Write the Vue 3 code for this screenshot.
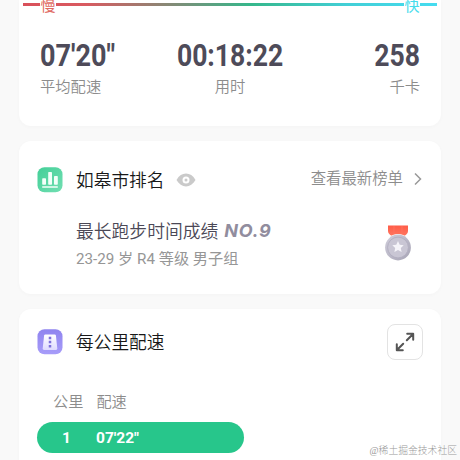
<script setup>
const stats = [
  { value: '07\'20"', label: '平均配速', kind: 'start' },
  { value: '00:18:22', label: '用时', kind: 'middle' },
  { value: '258', label: '千卡', kind: 'end' },
]
const splits = [{ km: 1, pace: '07\'22"', width: 207 }]
</script>

<template>
  <main class="page">
    <section class="card summary">
      <div class="pace-scale">
        <span class="scale-label slow">慢</span>
        <span class="scale-label fast">快</span>
      </div>
      <div class="stats">
        <div v-for="s in stats" :key="s.label" class="stat" :class="s.kind">
          <div class="value">{{ s.value }}</div>
          <div class="label">{{ s.label }}</div>
        </div>
      </div>
    </section>

    <section class="card ranking">
      <header class="head">
        <svg class="badge" viewBox="0 0 26 26">
          <defs>
            <linearGradient id="green" x1="0" y1="0" x2="1" y2="1">
              <stop offset="0" stop-color="#43cf98" />
              <stop offset="1" stop-color="#72dfb2" />
            </linearGradient>
          </defs>
          <rect x=".5" y=".2" width="25" height="25" rx="7" fill="url(#green)" />
          <g fill="#f2fff9">
            <rect x="5.2" y="11.3" width="3.8" height="6.5" rx=".7" />
            <rect x="11.2" y="5" width="3.8" height="12.800" rx=".7" />
            <rect x="17" y="9" width="3.8" height="8.800" rx=".7" />
            <rect x="5" y="19.3" width="16" height="1.5" rx=".7" />
          </g>
        </svg>
        <h2>如皋市排名</h2>
        <svg class="eye" viewBox="0 0 20 14">
          <path d="M.5 7C3 2.7 6.200 .6 10 .6S17 2.700 19.500 7C17 11.300 13.800 13.400 10 13.400S3 11.300 .5 7Z" fill="#cacaca" />
          <circle cx="10" cy="7" r="3.500" fill="#fff" />
          <circle cx="10" cy="7" r="1.500" fill="#cacaca" />
        </svg>
        <a class="more">查看最新榜单
          <svg viewBox="0 0 8 14"><path d="M1 1.500 6.500 7 1 12.500" /></svg>
        </a>
      </header>
      <div class="result">
        <div>
          <div class="record">最长跑步时间成绩<strong>NO.9</strong></div>
          <div class="group">23-29 岁 R4 等级 男子组</div>
        </div>
        <svg class="medal" viewBox="0 0 28 37">
          <defs>
            <linearGradient id="ribbon" x1="0" y1="0" x2="0" y2="1">
              <stop offset="0" stop-color="#ff5c48" />
              <stop offset="1" stop-color="#ff765f" />
            </linearGradient>
            <linearGradient id="silver" x1="0" y1="0" x2="1" y2="1">
              <stop offset="0" stop-color="#d0cedb" />
              <stop offset="1" stop-color="#a7a4b5" />
            </linearGradient>
          </defs>
          <path d="M4 .5H24V6Q24 9 20 11H8Q4 9 4 6Z" fill="url(#ribbon)" />
          <path d="M10 1V10M18 1V10" stroke="#ff7561" stroke-width=".8" />
          <circle cx="14" cy="22.500" r="13.500" fill="#fff" />
          <circle cx="14" cy="22.500" r="12.900" fill="url(#silver)" />
          <circle cx="14" cy="22.500" r="10.400" fill="#c9c6d4" stroke="#b1aebf" stroke-width=".9" />
          <path d="m14 16 1.700 3.700 4 .5-2.900 2.800.8 4-3.600-2-3.600 2 .8-4-2.900-2.800 4-.5Z" fill="#f5f4f9" />
        </svg>
      </div>
    </section>

    <section class="card splits">
      <header class="head">
        <svg class="badge" viewBox="0 0 26 26">
          <defs>
            <linearGradient id="purple" x1="0" y1="0" x2="0" y2="1">
              <stop offset="0" stop-color="#8f84ef" />
              <stop offset="1" stop-color="#a79cf9" />
            </linearGradient>
            <linearGradient id="road" x1="0" y1="0" x2="0" y2="1">
              <stop offset="0" stop-color="#fff" />
              <stop offset="1" stop-color="#dedaff" />
            </linearGradient>
          </defs>
          <rect x=".5" y=".2" width="25" height="25" rx="7" fill="url(#purple)" />
          <path d="M8.300 5.500H17.700Q18.700 5.500 18.900 6.500L20.300 19.600Q20.400 21 19 21H7Q5.600 21 5.700 19.600L7.100 6.500Q7.300 5.500 8.300 5.500Z" fill="url(#road)" />
          <path d="M13 7.800V10.200M13 11.800V14.200M13 16V18.400" stroke="#7d70db" stroke-width="2.500" />
        </svg>
        <h2>每公里配速</h2>
        <button class="expand" aria-label="展开">
          <svg viewBox="0 0 20 20">
            <path d="M12.200 1.800H18.200V7.800M17.800 2.200 11.800 8.200M1.800 12.200V18.200H7.800M2.200 17.800 8.200 11.800" />
          </svg>
        </button>
      </header>
      <div class="columns"><span>公里</span><span>配速</span></div>
      <div v-for="s in splits" :key="s.km" class="bar" :style="{ width: s.width + 'px' }">
        <span class="km">{{ s.km }}</span><span>{{ s.pace }}</span>
      </div>
    </section>
    <div class="watermark">@稀土掘金技术社区</div>
  </main>
</template>

<style>
body { background: #f9f9f9; overflow: hidden; }
</style>

<style scoped>
* { box-sizing: border-box; }
.page {
  position: relative;
  height: 460px;
  overflow: hidden;
  padding: 0 19px;
  display: flex;
  flex-direction: column;
  gap: 15px;
  background: #f9f9f9;
  font-family: Roboto, "Noto Sans CJK SC", sans-serif;
  font-weight: 350;
  color: #8c8c8c;
}
.card {
  flex: none;
  background: #fff;
  border-radius: 12px;
  box-shadow: 0 1px 4px rgba(0, 0, 0, .025);
}
.summary { height: 126px; border-radius: 0 0 12px 12px; padding: 3px 4px 0; }
.pace-scale {
  height: 3px;
  display: flex;
  justify-content: space-between;
  align-items: center;
  padding: 0 17px;
  background: linear-gradient(90deg, #d9505a 0%, #d95a60 15%, #35b78b 55%, #42cfd6 78%, #45dcf0 100%);
}
.scale-label { background: #fff; font-size: 15px; line-height: 16px; padding-top: 2px; width: 16px; text-align: center; font-weight: 400; }
.slow { color: #e06860; }
.fast { color: #45dcec; }
.stats { display: grid; grid-template-columns: 1fr 1fr 1fr; padding: 31px 17px 0; }
.stat { display: flex; flex-direction: column; }
.start { align-items: flex-start; }
.middle { align-items: center; }
.end { align-items: flex-end; }
.value {
  font-size: 32px;
  line-height: 36px;
  font-weight: 700;
  color: #4e4b59;
  white-space: nowrap;
  transform: scaleX(.83);
}
.start .value { transform-origin: left; transform: scaleX(.845); }
.end .value { transform-origin: right; }
.label { margin-top: 3px; font-size: 15.300px; line-height: 22px; }
.ranking { height: 153px; }
.head { display: flex; align-items: center; padding-left: 18px; }
.ranking .head { padding-top: 25px; padding-right: 19px; height: 52px; }
.badge { width: 26px; height: 26px; flex: none; }
h2 { margin: 0 0 0 13px; padding-top: 2px; font-size: 17.700px; line-height: 26px; font-weight: 350; color: #181818; }
.eye { width: 20px; height: 14px; margin-left: 12px; }
.more { margin-left: auto; display: flex; align-items: center; font-size: 15.400px; line-height: 24px; margin-top: -2px; }
.more svg { width: 8px; height: 14px; margin-left: 11px; fill: none; stroke: #999; stroke-width: 1.500; }
.result { display: flex; justify-content: space-between; padding: 26px 29px 0 57px; }
.record { font-size: 17.800px; line-height: 26px; color: #4b4856; white-space: nowrap; }
.record strong {
  position: relative;
  top: -1px;
  margin-left: 6px;
  font-family: Inter, sans-serif;
  font-size: 18px;
  font-style: italic;
  font-weight: 700;
  letter-spacing: .7px;
  color: #918d9e;
}
.group { margin-top: 3px; font-size: 15.200px; font-weight: 400; line-height: 22px; white-space: nowrap; color: #969696; }
.medal { width: 28px; height: 37px; margin-top: 6px; }
.splits { height: 170px; }
.splits .head { padding: 15px 18px 0; height: 51px; }
.expand {
  width: 36px;
  height: 36px;
  margin-left: auto;
  padding: 0;
  display: grid;
  place-items: center;
  background: #fff;
  border: 1px solid #e3e3e3;
  border-radius: 8px;
}
.expand svg { width: 20px; height: 20px; fill: none; stroke: #555; stroke-width: 2; stroke-linejoin: round; stroke-linecap: round; }
.columns { display: flex; gap: 13px; padding: 31px 0 0 34px; font-size: 15.200px; line-height: 22px; }
.bar {
  display: flex;
  align-items: center;
  margin: 9px 0 0 18px;
  height: 31px;
  border-radius: 16px;
  background: #27c68b;
  color: #fff;
  font-size: 15.500px;
  font-weight: 700;
}
.km { width: 59px; text-align: center; }
.watermark {
  position: absolute;
  right: 3px;
  bottom: 1px;
  font: 300 9.800px/16px "Liberation Serif", "Noto Sans CJK SC", serif;
  color: #999;
}
</style>
